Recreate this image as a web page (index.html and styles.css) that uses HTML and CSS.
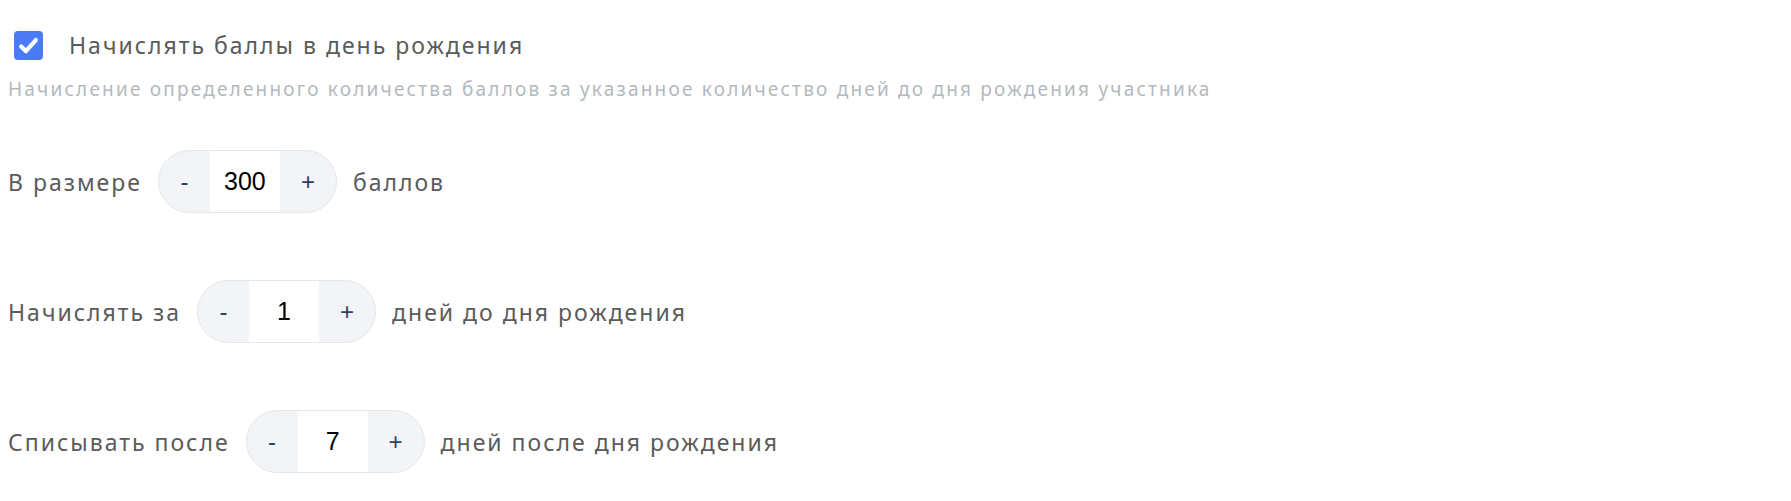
FILE: index.html
```html
<!DOCTYPE html>
<html lang="ru">
<head>
  <meta charset="UTF-8" />
  <meta name="viewport" content="width=device-width, initial-scale=1" />
  <title>Баллы в день рождения</title>
  <link rel="stylesheet" href="styles.css">
</head>
<body>

  <section class="birthday">
    <label class="toggle">
      <span class="check">
        <svg viewBox="0 0 24 24" width="27" height="27"><path d="M5.5 12.8l4.2 4.2L18.5 7.2" fill="none" stroke="#fff" stroke-width="3.8" stroke-linecap="round" stroke-linejoin="round"/></svg>
      </span>
      <span class="toggle-text">Начислять баллы в день рождения</span>
    </label>
    <p class="hint">Начисление определенного количества баллов за указанное количество дней до дня рождения участника</p>

    <div class="setting-row">
      <span>В размере</span>
      <div class="stepper">
        <button class="step-btn minus">-</button>
        <input class="step-value" type="text" value="300" />
        <button class="step-btn plus">+</button>
      </div>
      <span>баллов</span>
    </div>

    <div class="setting-row">
      <span>Начислять за</span>
      <div class="stepper">
        <button class="step-btn minus">-</button>
        <input class="step-value" type="text" value="1" />
        <button class="step-btn plus">+</button>
      </div>
      <span>дней до дня рождения</span>
    </div>

    <div class="setting-row">
      <span>Списывать после</span>
      <div class="stepper">
        <button class="step-btn minus">-</button>
        <input class="step-value" type="text" value="7" />
        <button class="step-btn plus">+</button>
      </div>
      <span>дней после дня рождения</span>
    </div>
  </section>

</body>
</html>
```

FILE: styles.css
```css
* {
  box-sizing: border-box;
}

body {
  margin: 0;
  padding: 0 8px;
  background: #fff;
  font-family: 'Noto Sans', 'Open Sans', sans-serif;
  color: #5b5b5b;
}

.toggle {
  display: flex;
  align-items: center;
  gap: 26px;
  margin-top: 31px;
  padding-left: 6px;
  font-size: 23px;
  line-height: 29px;
  letter-spacing: 2px;
  cursor: pointer;
}

.check {
  width: 29px;
  height: 29px;
  border-radius: 4px;
  background: #4a7bf5;
  display: flex;
  align-items: center;
  justify-content: center;
}

.hint {
  margin: 16px 0 0;
  font-size: 19px;
  line-height: 26px;
  letter-spacing: 2.2px;
  color: #b3b9be;
}

.setting-row {
  display: flex;
  align-items: center;
  gap: 16px;
  height: 63px;
  margin-top: 67px;
  font-size: 23px;
  letter-spacing: 2px;
}

.birthday .hint + .setting-row {
  margin-top: 48px;
}

.stepper {
  display: flex;
  height: 63px;
  border: 1px solid #e4e6ea;
  border-radius: 32px;
  background: #f3f4f6;
  overflow: hidden;
  letter-spacing: 0;
}

.step-btn {
  width: 51px;
  border: none;
  background: transparent;
  color: #2a4065;
  font-family: 'Liberation Sans', Arial, sans-serif;
  font-size: 24px;
  padding: 0;
  cursor: pointer;
}

.step-btn.plus {
  width: 56px;
}

.step-value {
  width: 70px;
  border: none;
  background: #fff;
  text-align: center;
  font-family: 'Liberation Sans', Arial, sans-serif;
  font-size: 25px;
  color: #000;
  outline: none;
}
```
